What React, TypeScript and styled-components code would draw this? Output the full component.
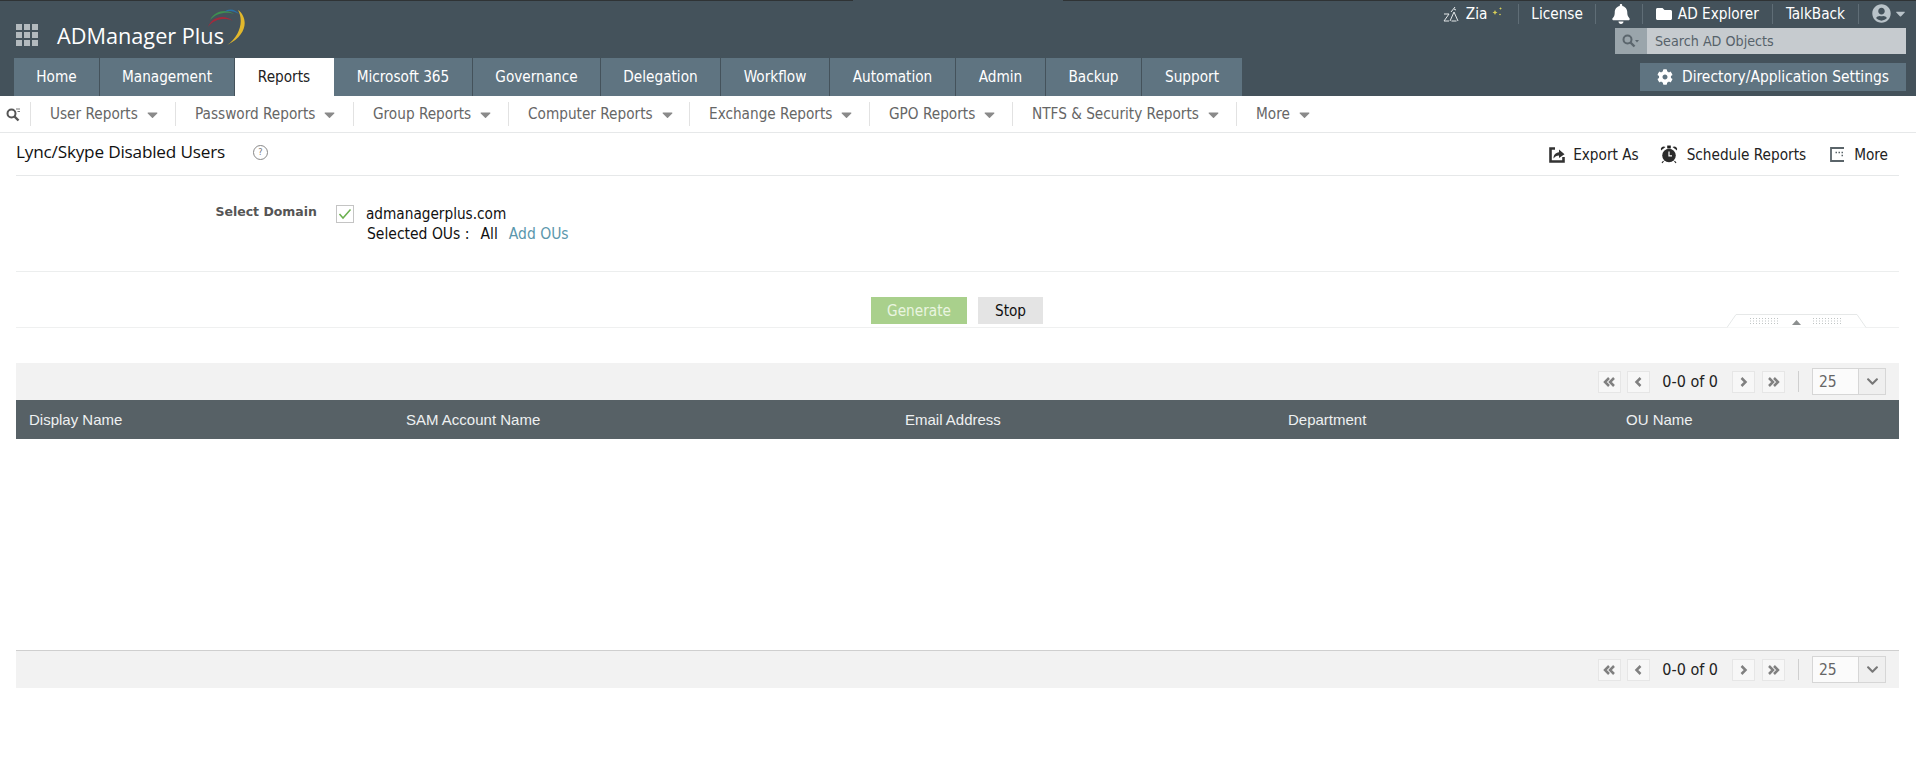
import * as React from "react";
import styled, { createGlobalStyle } from "styled-components";
import { FaBell, FaCog, FaFolder, FaUserCircle, FaCaretDown, FaChevronDown } from "react-icons/fa";

const GlobalStyle = createGlobalStyle`
  html, body {
    margin: 0;
    padding: 0;
    background: #fff;
    font-family: "DejaVu Sans Condensed", "DejaVu Sans", sans-serif;
    font-size: 15.2px;
    color: #222;
  }
`;

const Page = styled.div`
  width: 1916px;
  height: 772px;
  overflow: hidden;
`;

const TopEdge = styled.div`
  display: flex;
  height: 1px;
`;

const EdgePiece = styled.div<{ $w?: number }>`
  background: ${(p) => (p.$w ? "#44525b" : "#2f3335")};
  flex: ${(p) => (p.$w ? `0 0 ${p.$w}px` : "1")};
`;

const Header = styled.header`
  display: flex;
  justify-content: space-between;
  height: 95px;
  background: #44525b;
`;

const HeaderLeft = styled.div`
  display: flex;
  flex-direction: column;
  justify-content: space-between;
  padding-left: 14px;
`;

const Brand = styled.div`
  position: relative;
  display: flex;
  align-items: center;
  height: 57px;
  padding-left: 2px;
`;

const AppGrid = styled.div`
  display: grid;
  grid-template-columns: repeat(3, 6px);
  grid-auto-rows: 6px;
  gap: 2px;
  margin-right: 19px;
  margin-top: 10px;
  span {
    background: #b3babe;
  }
`;

const LogoText = styled.span`
  margin-top: 11px;
  font-family: "Open Sans", sans-serif;
  font-size: 21.7px;
  color: #fff;
`;

const LogoArcs = styled.svg`
  position: absolute;
  left: 193px;
  top: 7px;
`;

const Tabs = styled.nav`
  display: flex;
  height: 38px;
`;

const Tab = styled.div<{ $w: number; $active?: boolean }>`
  display: flex;
  align-items: center;
  justify-content: center;
  width: ${(p) => p.$w}px;
  background: ${(p) => (p.$active ? "#fff" : "#5f7481")};
  color: ${(p) => (p.$active ? "#222" : "#fff")};
  border-right: 1px solid ${(p) => (p.$active ? "#fff" : "#44525b")};
  box-sizing: border-box;
  &:last-child {
    border-right: none;
  }
`;

const HeaderRight = styled.div`
  display: flex;
  flex-direction: column;
  align-items: flex-end;
  padding-right: 10px;
`;

const TopLinks = styled.div`
  display: flex;
  align-items: center;
  height: 25px;
  margin-right: -2px;
  color: #fff;
`;

const TopLink = styled.div<{ $sep?: boolean; $pl: number; $pr: number; $gap?: number }>`
  display: flex;
  align-items: center;
  gap: ${(p) => p.$gap ?? 6}px;
  height: 20px;
  padding: 0 ${(p) => p.$pr}px 0 ${(p) => p.$pl}px;
  border-right: ${(p) => (p.$sep ? "1px solid #5f6d76" : "none")};
`;

const SearchBox = styled.div`
  display: flex;
  width: 291px;
  height: 26px;
  margin-top: 2px;
`;

const SearchIconCell = styled.div`
  display: flex;
  align-items: center;
  justify-content: center;
  width: 32px;
  background: #9aa5ab;
`;

const SearchField = styled.div`
  flex: 1;
  display: flex;
  align-items: center;
  padding-left: 8px;
  background: #c6cbcf;
  color: #56626a;
  font-size: 14.2px;
`;

const SettingsButton = styled.div`
  display: flex;
  align-items: center;
  justify-content: center;
  gap: 9px;
  width: 266px;
  height: 28px;
  margin-top: 9px;
  background: #5f7481;
  color: #fff;
  font-size: 15.4px;
`;

const SubNav = styled.nav`
  display: flex;
  align-items: center;
  height: 36px;
  border-bottom: 1px solid #e6e8e9;
`;

const SearchToggle = styled.div`
  display: flex;
  align-items: center;
  width: 31px;
  height: 24px;
  padding-left: 6px;
  box-sizing: border-box;
  border-right: 1px solid #e2e2e2;
`;

const SubItem = styled.div<{ $w: number; $last?: boolean }>`
  display: flex;
  align-items: center;
  gap: 6px;
  width: ${(p) => p.$w}px;
  height: 24px;
  box-sizing: border-box;
  padding-left: 19px;
  color: #666;
  border-right: ${(p) => (p.$last ? "none" : "1px solid #e2e2e2")};
`;

const Caret = styled(FaCaretDown)`
  color: #8a8a8a;
  font-size: 17px;
`;

const Content = styled.main`
  padding: 0 17px 0 16px;
`;

const TitleRow = styled.div`
  display: flex;
  align-items: center;
  justify-content: space-between;
  height: 42px;
  border-bottom: 1px solid #e6e8e9;
`;

const TitleLeft = styled.div`
  display: flex;
  align-items: center;
  margin-top: -6px;
`;

const Title = styled.h1`
  margin: 0;
  font-family: "Open Sans", sans-serif;
  font-weight: 400;
  font-size: 17.2px;
  color: #111;
  letter-spacing: -0.2px;
`;

const HelpMark = styled.span`
  display: flex;
  align-items: center;
  justify-content: center;
  width: 13px;
  height: 13px;
  margin-left: 28px;
  margin-top: 2px;
  border: 1px solid #888;
  border-radius: 50%;
  font-size: 9px;
  color: #777;
`;

const Actions = styled.div`
  display: flex;
  align-items: center;
  margin-top: 1px;
  padding-right: 11px;
  color: #222;
`;

const Action = styled.div<{ $ml: number; $gap: number }>`
  display: flex;
  align-items: center;
  gap: ${(p) => p.$gap}px;
  margin-left: ${(p) => p.$ml}px;
`;

const DomainSection = styled.section`
  display: flex;
  height: 95px;
  border-bottom: 1px solid #eceeee;
`;

const DomainLabel = styled.div`
  width: 301px;
  margin-top: 28px;
  text-align: right;
  font-family: "DejaVu Sans", sans-serif;
  font-weight: 700;
  font-size: 12.5px;
  color: #555;
`;

const DomainBody = styled.div`
  margin-left: 19px;
  margin-top: 29px;
`;

const DomainRow = styled.div`
  display: flex;
  align-items: center;
  gap: 12px;
  color: #111;
`;

const CheckBox = styled.span`
  display: flex;
  align-items: center;
  justify-content: center;
  width: 16px;
  height: 16px;
  border: 1px solid #c4c4c4;
`;

const OuRow = styled.div`
  display: flex;
  margin-top: 2px;
  margin-left: 31px;
  font-size: 15.5px;
  color: #111;
`;

const OuValue = styled.span`
  margin-left: 11px;
`;

const OuLink = styled.span`
  margin-left: 11px;
  color: #5b97ad;
`;

const ButtonSection = styled.section`
  position: relative;
  display: flex;
  justify-content: center;
  gap: 11px;
  height: 56px;
  padding-top: 25px;
  padding-right: 1px;
  box-sizing: border-box;
  border-bottom: 1px solid #eff0f0;
`;

const Button = styled.div<{ $green?: boolean }>`
  display: flex;
  align-items: center;
  justify-content: center;
  width: ${(p) => (p.$green ? 96 : 65)}px;
  height: 27px;
  background: ${(p) => (p.$green ? "#a9d08c" : "#e4e4e4")};
  color: ${(p) => (p.$green ? "#eaf5e0" : "#111")};
`;

const CollapseHandle = styled.svg`
  position: absolute;
  right: 32px;
  bottom: -1px;
`;

const Toolbar = styled.div<{ $bottom?: boolean }>`
  display: flex;
  align-items: center;
  justify-content: flex-end;
  height: 37px;
  margin-top: ${(p) => (p.$bottom ? 0 : 35)}px;
  padding-right: 13px;
  background: #f2f2f2;
  border-top: ${(p) => (p.$bottom ? "1px solid #cfcfcf" : "none")};
`;

const PageButton = styled.span<{ $ml?: number }>`
  display: flex;
  align-items: center;
  justify-content: center;
  width: 23px;
  height: 22px;
  box-sizing: border-box;
  margin-left: ${(p) => p.$ml ?? 0}px;
  border: 1px solid #e6e6e6;
  background: #f7f7f7;
`;

const PageText = styled.span`
  margin: 0 14px 0 12px;
  font-size: 16px;
  color: #222;
`;

const ToolSep = styled.span`
  width: 1px;
  height: 21px;
  margin: 0 13px;
  background: #cfcfcf;
`;

const PageSize = styled.div`
  display: flex;
  width: 74px;
  height: 27px;
  box-sizing: border-box;
  border: 1px solid #d6d6d6;
  background: #fbfbfb;
`;

const PageSizeValue = styled.span`
  flex: 1;
  display: flex;
  align-items: center;
  padding-left: 6px;
  font-size: 15.5px;
  color: #666;
`;

const PageSizeArrow = styled.span`
  display: flex;
  align-items: center;
  justify-content: center;
  width: 26px;
  background: #efefef;
  border-left: 1px solid #d6d6d6;
  color: #777;
`;

const TableHead = styled.div`
  display: grid;
  grid-template-columns: 377px 499px 383px 338px 1fr;
  align-items: center;
  height: 39px;
  padding-bottom: 1px;
  box-sizing: border-box;
  background: #576166;
  color: #eef0f1;
  font-family: "Liberation Sans", sans-serif;
  font-size: 15px;
  span {
    padding-left: 13px;
  }
`;

const TableBody = styled.div`
  height: 211px;
`;

const tabs = [
  { label: "Home", w: 86 },
  { label: "Management", w: 135 },
  { label: "Reports", w: 99, active: true },
  { label: "Microsoft 365", w: 139 },
  { label: "Governance", w: 128 },
  { label: "Delegation", w: 120 },
  { label: "Workflow", w: 109 },
  { label: "Automation", w: 126 },
  { label: "Admin", w: 90 },
  { label: "Backup", w: 96 },
  { label: "Support", w: 100 },
];

const subItems = [
  { label: "User Reports", w: 145 },
  { label: "Password Reports", w: 178 },
  { label: "Group Reports", w: 155 },
  { label: "Computer Reports", w: 181 },
  { label: "Exchange Reports", w: 180 },
  { label: "GPO Reports", w: 143 },
  { label: "NTFS & Security Reports", w: 224 },
  { label: "More", w: 100, last: true },
];

const ZiaIcon = () => (
  <svg width="17" height="16" viewBox="0 0 17 16" fill="none" stroke="#e4e8ea" strokeWidth="1">
    <path d="M1 8h5L1 15h5" />
    <path d="M7 15l4-9 4 9M8.500 15h5" />
    <path d="M8 6l4-5M11 3l2 1" />
  </svg>
);

const Sparkle = () => (
  <svg width="12" height="10" viewBox="0 0 12 10" fill="#d8cf58" style={{ marginLeft: -1, marginTop: -4 }}>
    <path d="M3 3l.8 1.700L5.500 5.500l-1.700.8L3 8l-.8-1.700L.5 5.500l1.700-.8z" />
    <path d="M8.500 0l.4 1.100 1.100.4-1.100.4-.4 1.100-.4-1.100L7 1.500l1.100-.4z" />
    <circle cx="8" cy="7.500" r=".8" />
  </svg>
);

const SearchGlass = ({ color }: { color: string }) => (
  <svg width="18" height="14" viewBox="0 0 18 14" fill="none">
    <circle cx="5.500" cy="5.500" r="4" stroke={color} strokeWidth="2" />
    <path d="M8.500 8.500l4 4" stroke={color} strokeWidth="2.400" />
    <path d="M13 6h4l-2 2.500z" fill={color} />
  </svg>
);

const SubSearch = () => (
  <svg width="15" height="15" viewBox="0 0 15 15" fill="none">
    <circle cx="5.500" cy="6.500" r="4" stroke="#555" strokeWidth="2" />
    <path d="M8.500 9.500l4 4" stroke="#555" strokeWidth="2.400" />
    <path d="M10 2h4M11.500 4.500h2.500" stroke="#777" strokeWidth="1" />
  </svg>
);

const ExportIcon = () => (
  <svg width="16" height="16" viewBox="0 0 16 16" fill="none">
    <path d="M6 1.500H1.500v13h13V10" stroke="#333" strokeWidth="2.600" />
    <path d="M4.500 11.500c0-3.500 2-5.800 5.500-6.200V2.500l5.500 4.700L10 11V8.400c-2.300 0-4 .9-5.500 3.100z" fill="#333" />
  </svg>
);

const AlarmIcon = () => (
  <svg width="18" height="19" viewBox="0 0 18 19">
    <circle cx="9" cy="10.500" r="6.800" fill="#2b2b2b" />
    <path d="M1 5.500A3 3 0 0 1 5.500 2zM17 5.500A3 3 0 0 0 12.500 2z" fill="#2b2b2b" />
    <path d="M7.800 1h2.400v2H7.800zM3.500 16l-1.500 2M14.500 16l1.500 2" stroke="#2b2b2b" strokeWidth="1.200" />
    <path d="M9 6.500v4.300h3" stroke="#fff" strokeWidth="1.200" fill="none" />
  </svg>
);

const MoreIcon = () => (
  <svg width="15" height="15" viewBox="0 0 15 15" fill="none">
    <path d="M14 1H1v13h13" stroke="#5a6469" strokeWidth="1.800" />
    <path d="M5.500 5.500h1.500M8.500 5.500h1.500M11.500 5.500h1.500M11.500 8.500h1.500" stroke="#5a6469" strokeWidth="1.500" />
  </svg>
);

const ChevronGlyph = ({ dir, double }: { dir: "l" | "r"; double?: boolean }) => (
  <svg width="13" height="10" viewBox="0 0 13 10" fill="none" stroke="#808080" strokeWidth="2.500">
    {dir === "l" ? (
      <>
        <path d={double ? "M6 1L2 5l4 4" : "M8.500 1L4.500 5l4 4"} />
        {double && <path d="M11 1L7 5l4 4" />}
      </>
    ) : (
      <>
        <path d={double ? "M2 1l4 4-4 4" : "M4.500 1l4 4-4 4"} />
        {double && <path d="M7 1l4 4-4 4" />}
      </>
    )}
  </svg>
);

const Pager = ({ bottom }: { bottom?: boolean }) => (
  <Toolbar $bottom={bottom}>
    <PageButton>
      <ChevronGlyph dir="l" double />
    </PageButton>
    <PageButton $ml={6}>
      <ChevronGlyph dir="l" />
    </PageButton>
    <PageText>0-0 of 0</PageText>
    <PageButton>
      <ChevronGlyph dir="r" />
    </PageButton>
    <PageButton $ml={7}>
      <ChevronGlyph dir="r" double />
    </PageButton>
    <ToolSep />
    <PageSize>
      <PageSizeValue>25</PageSizeValue>
      <PageSizeArrow>
        <FaChevronDown size={13} />
      </PageSizeArrow>
    </PageSize>
  </Toolbar>
);

export default function App() {
  return (
    <Page>
      <GlobalStyle />
      <TopEdge>
        <EdgePiece />
        <EdgePiece $w={210} />
        <EdgePiece />
      </TopEdge>
      <Header>
        <HeaderLeft>
          <Brand>
            <AppGrid>
              {Array.from({ length: 9 }).map((_, i) => (
                <span key={i} />
              ))}
            </AppGrid>
            <LogoText>ADManager Plus</LogoText>
            <LogoArcs width="42" height="40" viewBox="0 0 42 40">
              <path d="M1 19C5 8 18 6 26 13C18 9 7 11 1 19Z" fill="#a32a3c" />
              <path d="M3 12C8 2 20 1 27 6C20 3 9 5 3 12Z" fill="#3f9150" />
              <path d="M17 4C22 0 28 1 32 6C27 3 22 2 17 4Z" fill="#2a71a6" />
              <path d="M31 2C40 8 43 26 20 37C33 28 37 13 31 2Z" fill="#e2b82c" />
            </LogoArcs>
          </Brand>
          <Tabs>
            {tabs.map((t) => (
              <Tab key={t.label} $w={t.w} $active={t.active}>
                {t.label}
              </Tab>
            ))}
          </Tabs>
        </HeaderLeft>
        <HeaderRight>
          <TopLinks>
            <TopLink $pl={0} $pr={14} $sep>
              <ZiaIcon />
              <span>Zia</span>
              <Sparkle />
            </TopLink>
            <TopLink $pl={12} $pr={12} $sep>
              License
            </TopLink>
            <TopLink $pl={15} $pr={11} $sep>
              <FaBell size={20} />
            </TopLink>
            <TopLink $pl={13} $pr={13} $sep>
              <FaFolder size={16} />
              <span>AD Explorer</span>
            </TopLink>
            <TopLink $pl={13} $pr={13} $sep>
              TalkBack
            </TopLink>
            <TopLink $pl={13} $pr={0} $gap={2}>
              <FaUserCircle size={19} color="#b9c3c9" />
              <FaCaretDown size={15} color="#b9c3c9" />
            </TopLink>
          </TopLinks>
          <SearchBox>
            <SearchIconCell>
              <SearchGlass color="#5b666d" />
            </SearchIconCell>
            <SearchField>Search AD Objects</SearchField>
          </SearchBox>
          <SettingsButton>
            <FaCog size={16} />
            Directory/Application Settings
          </SettingsButton>
        </HeaderRight>
      </Header>
      <SubNav>
        <SearchToggle>
          <SubSearch />
        </SearchToggle>
        {subItems.map((s) => (
          <SubItem key={s.label} $w={s.w} $last={s.last}>
            {s.label}
            <Caret />
          </SubItem>
        ))}
      </SubNav>
      <Content>
        <TitleRow>
          <TitleLeft>
            <Title>Lync/Skype Disabled Users</Title>
            <HelpMark>?</HelpMark>
          </TitleLeft>
          <Actions>
            <Action $ml={0} $gap={8}>
              <ExportIcon />
              Export As
            </Action>
            <Action $ml={21} $gap={9}>
              <AlarmIcon />
              Schedule Reports
            </Action>
            <Action $ml={24} $gap={9}>
              <MoreIcon />
              More
            </Action>
          </Actions>
        </TitleRow>
        <DomainSection>
          <DomainLabel>Select Domain</DomainLabel>
          <DomainBody>
            <DomainRow>
              <CheckBox>
                <svg width="14" height="12" viewBox="0 0 14 12" fill="none">
                  <path d="M1.500 6l3.500 4 7.500-8.500" stroke="#6bb04f" strokeWidth="1.500" />
                </svg>
              </CheckBox>
              admanagerplus.com
            </DomainRow>
            <OuRow>
              Selected OUs :<OuValue>All</OuValue>
              <OuLink>Add OUs</OuLink>
            </OuRow>
          </DomainBody>
        </DomainSection>
        <ButtonSection>
          <Button $green>Generate</Button>
          <Button>Stop</Button>
          <CollapseHandle width="140" height="14" viewBox="0 0 140 14" fill="none">
            <path d="M0 13.500L9 .5h121l9 13" stroke="#e6e8e8" fill="#fff" />
            <path d="M23 4.500h28M23 7h28M23 9.500h28M86 4.500h29M86 7h29M86 9.500h29" stroke="#bfc4c4" strokeWidth="1" strokeDasharray="1 2" />
            <path d="M65 11l4.500-5 4.500 5z" fill="#8c8f8f" />
          </CollapseHandle>
        </ButtonSection>
        <Pager />
        <TableHead>
          <span>Display Name</span>
          <span>SAM Account Name</span>
          <span>Email Address</span>
          <span>Department</span>
          <span>OU Name</span>
        </TableHead>
        <TableBody />
        <Pager bottom />
      </Content>
    </Page>
  );
}
